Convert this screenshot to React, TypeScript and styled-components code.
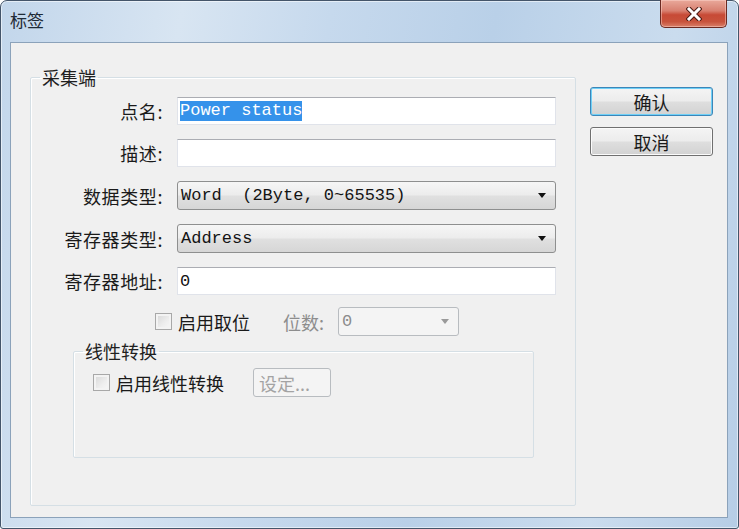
import React from 'react';
import styled, {createGlobalStyle} from 'styled-components';

const GlobalStyle = createGlobalStyle`
  html, body {
    margin: 0;
    padding: 0;
    background: #ffffff;
  }
  body {
    font-family: "Noto Sans CJK SC", "Noto Sans", sans-serif;
  }
`

const CJK = `"Noto Sans CJK SC", "Noto Sans", sans-serif`
const MONO = `"Liberation Mono", "Noto Sans CJK SC", monospace`

const Window = styled.div`
  box-sizing: border-box;
  width: 739px;
  height: 529px;
  border: 1px solid #44556a;
  border-radius: 7px 7px 3px 3px;
  background: linear-gradient(100deg, #c2d6eb 0%, #d8e5f2 22%, #c6d9ed 40%, #b9d0e8 60%, #cadcee 82%, #b6cde6 100%);
  box-shadow: inset 0 0 0 1px rgba(255, 255, 255, 0.55);
  display: flex;
  flex-direction: column;
  padding: 0 10px 10px 9px;
`

const TitleBar = styled.div`
  height: 41px;
  display: flex;
  justify-content: space-between;
  align-items: flex-start;
`

const Title = styled.span`
  font-family: ${CJK};
  font-size: 17px;
  line-height: 18px;
  margin-top: 10px;
  color: #1f2a36;
`

const CloseButton = styled.div`
  box-sizing: border-box;
  width: 67px;
  height: 28px;
  margin-top: -1px;
  margin-right: 1px;
  border: 1px solid #6b2a22;
  border-top: none;
  border-radius: 0 0 5px 5px;
  background: linear-gradient(180deg, #e9a99b 0%, #d88070 40%, #c74a36 55%, #c8533c 80%, #d9806a 100%);
  box-shadow: inset 0 0 0 1px rgba(255, 220, 210, 0.45);
  display: flex;
  align-items: center;
  justify-content: center;
`

const Client = styled.div`
  flex: 1;
  display: flex;
  gap: 14px;
  border: 1px solid #8ba2ba;
  background: #f0f0f0;
  padding: 25px 14px 11px 19px;
`

const Group = styled.fieldset<{$width?: number; $height?: number}>`
  box-sizing: border-box;
  margin: 0;
  min-width: 0;
  width: ${p => (p.$width ? `${p.$width}px` : 'auto')};
  height: ${p => (p.$height ? `${p.$height}px` : 'auto')};
  border: 1px solid #d5dfe5;
  box-shadow: 1px 1px 0 #ffffff inset;
  border-radius: 2px;
`

const OuterGroup = styled(Group)`
  padding: 11px 18px 0 0;
`

const InnerGroup = styled(Group)`
  margin: 6px 0 0 42px;
  padding: 8px 0 0 19px;
`

const Legend = styled.legend<{$offset: number}>`
  font-family: ${CJK};
  font-size: 18px;
  line-height: 18px;
  color: #1f1f1f;
  margin-left: ${p => p.$offset}px;
  padding: 0 2px;
`

const FormGrid = styled.div`
  display: grid;
  grid-template-columns: 132px 379px;
  column-gap: 14px;
  row-gap: 14px;
  align-items: center;
`

const Label = styled.span`
  font-family: ${CJK};
  font-size: 18px;
  letter-spacing: 0.6px;
  line-height: 28px;
  color: #1a1a1a;
  text-align: right;
  white-space: nowrap;
`

const TextBox = styled.div`
  box-sizing: border-box;
  height: 28px;
  background: #ffffff;
  border: 1px solid #e0e3ea;
  border-top-color: #abadb3;
  padding: 0 2px;
  display: flex;
  align-items: center;
  font-family: ${MONO};
  font-size: 17px;
  color: #111;
  white-space: pre;
`

const Selected = styled.span`
  background: #3592ea;
  color: #ffffff;
  line-height: 20px;
`

const Combo = styled.div<{$disabled?: boolean; $width?: number}>`
  box-sizing: border-box;
  height: 29px;
  width: ${p => (p.$width ? `${p.$width}px` : 'auto')};
  border: 1px solid ${p => (p.$disabled ? '#b8bcc0' : '#8e8f8f')};
  border-radius: 3px;
  background: ${p => p.$disabled
    ? '#f4f4f4'
    : 'linear-gradient(180deg, #f6f6f6 0%, #ececec 48%, #e0e0e0 52%, #d6d6d6 100%)'};
  display: flex;
  align-items: center;
  justify-content: space-between;
  padding: 0 9px 0 3px;
  font-family: ${MONO};
  font-size: 17px;
  color: ${p => (p.$disabled ? '#8c8c8c' : '#141414')};
  white-space: pre;
`

const Arrow = styled.span<{$disabled?: boolean}>`
  width: 0;
  height: 0;
  border-left: 4px solid transparent;
  border-right: 4px solid transparent;
  border-top: 5px solid ${p => (p.$disabled ? '#9a9a9a' : '#111')};
`

const OptionRow = styled.div<{$indent: number}>`
  display: flex;
  align-items: center;
  height: 29px;
  margin: 12px 0 0 ${p => p.$indent}px;
`

const CheckItem = styled.label`
  display: flex;
  align-items: center;
  gap: 6px;
  font-family: ${CJK};
  font-size: 18px;
  color: #1a1a1a;
  white-space: nowrap;
`

const CheckBox = styled.span`
  box-sizing: border-box;
  width: 17px;
  height: 17px;
  border: 1px solid #a8a8a8;
  background: linear-gradient(135deg, #d6d6d6 0%, #eeeeee 60%, #f8f8f8 100%);
  box-shadow: inset 0 0 0 2px #f3f3f3;
`

const DimLabel = styled.span`
  font-family: ${CJK};
  font-size: 18px;
  color: #8d8d8d;
  margin: 0 14px 0 33px;
  white-space: nowrap;
`

const SmallButton = styled.div`
  box-sizing: border-box;
  width: 78px;
  height: 29px;
  margin-left: 29px;
  border: 1px solid #b8bcc0;
  border-radius: 3px;
  background: #f4f4f4;
  display: flex;
  align-items: center;
  padding-left: 5px;
  font-family: ${CJK};
  font-size: 18px;
  color: #a3a3a3;
`

const InnerRow = styled.div`
  display: flex;
  align-items: center;
  height: 29px;
`

const ButtonColumn = styled.div`
  display: flex;
  flex-direction: column;
  gap: 11px;
  padding-top: 19px;
`

const DialogButton = styled.div<{$default?: boolean}>`
  box-sizing: border-box;
  width: 123px;
  height: 29px;
  border: 1px solid ${p => (p.$default ? '#3c86b8' : '#707070')};
  border-radius: 3px;
  background: linear-gradient(180deg, #f4f4f4 0%, #ececec 48%, #dedede 52%, #d2d2d2 100%);
  box-shadow: ${p => (p.$default ? 'inset 0 0 0 1px #6fd0f7' : 'inset 0 0 0 1px #fbfbfb')};
  display: flex;
  align-items: center;
  justify-content: center;
  font-family: ${CJK};
  font-size: 18px;
  color: #1b1b1b;
`

const fields: {label: string, kind: 'text' | 'combo', value: string, selected?: boolean}[] = [
    {label: '点名:', kind: 'text', value: 'Power status', selected: true},
    {label: '描述:', kind: 'text', value: ''},
    {label: '数据类型:', kind: 'combo', value: 'Word  (2Byte, 0~65535)'},
    {label: '寄存器类型:', kind: 'combo', value: 'Address'},
    {label: '寄存器地址:', kind: 'text', value: '0'},
]

const App = () => {
    return (
        <>
            <GlobalStyle/>
            <Window>
                <TitleBar>
                    <Title>标签</Title>
                    <CloseButton>
                        <svg width="16" height="14" viewBox="0 0 16 14">
                            <path d="M3 2 L13 12 M13 2 L3 12" stroke="#4a1a14" strokeWidth="5" strokeLinecap="square"/>
                            <path d="M3 2 L13 12 M13 2 L3 12" stroke="#ffffff" strokeWidth="3" strokeLinecap="square"/>
                        </svg>
                    </CloseButton>
                </TitleBar>
                <Client>
                    <OuterGroup $width={546}>
                        <Legend $offset={9}>采集端</Legend>
                        <FormGrid>
                            {fields.map(f => (
                                <React.Fragment key={f.label}>
                                    <Label>{f.label}</Label>
                                    {f.kind === 'text' ? (
                                        <TextBox>
                                            {f.selected ? <Selected>{f.value}</Selected> : f.value}
                                        </TextBox>
                                    ) : (
                                        <Combo>
                                            <span>{f.value}</span>
                                            <Arrow/>
                                        </Combo>
                                    )}
                                </React.Fragment>
                            ))}
                        </FormGrid>
                        <OptionRow $indent={124}>
                            <CheckItem><CheckBox/>启用取位</CheckItem>
                            <DimLabel>位数:</DimLabel>
                            <Combo $disabled $width={121}>
                                <span>0</span>
                                <Arrow $disabled/>
                            </Combo>
                        </OptionRow>
                        <InnerGroup $width={461} $height={116}>
                            <Legend $offset={-10}>线性转换</Legend>
                            <InnerRow>
                                <CheckItem><CheckBox/>启用线性转换</CheckItem>
                                <SmallButton>设定...</SmallButton>
                            </InnerRow>
                        </InnerGroup>
                    </OuterGroup>
                    <ButtonColumn>
                        <DialogButton $default>确认</DialogButton>
                        <DialogButton>取消</DialogButton>
                    </ButtonColumn>
                </Client>
            </Window>
        </>
    );
};

export default App;
